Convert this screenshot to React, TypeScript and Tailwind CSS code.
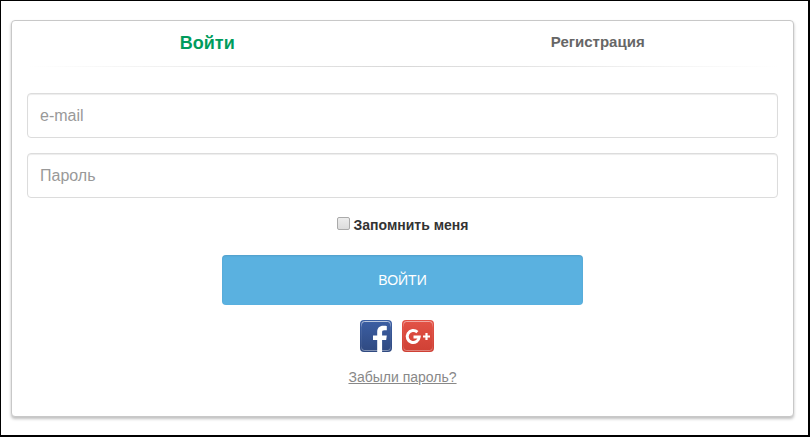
import { useState } from "react";

function FacebookIcon() {
  return (
    <svg width="32" height="32" viewBox="0 0 32 32" aria-hidden="true">
      <defs>
        <linearGradient id="fb-fill" x1="0" y1="0" x2="0" y2="1">
          <stop offset="0" stopColor="#3c5fa4" />
          <stop offset="1" stopColor="#2f4980" />
        </linearGradient>
        <linearGradient id="fb-edge" x1="0" y1="0" x2="0" y2="1">
          <stop offset="0" stopColor="#fff" stopOpacity="0.65" />
          <stop offset="0.2" stopColor="#fff" stopOpacity="0.08" />
          <stop offset="0.85" stopColor="#fff" stopOpacity="0.05" />
          <stop offset="1" stopColor="#fff" stopOpacity="0.4" />
        </linearGradient>
      </defs>
      <rect width="32" height="32" rx="4" fill="url(#fb-fill)" />
      <rect x="1.5" y="1.5" width="29" height="29" rx="3" fill="none" stroke="url(#fb-edge)" />
      <path
        fill="#fff"
        d="M17.2 32V20H13v-4.600h4.200V12C17.200 8 19.600 5.800 23.200 5.800c1.700 0 3.100.1 3.600.2v4.200h-2.500c-1.900 0-2.200.9-2.200 2.300v2.900h4.700l-.6 4.600h-4.100v12z"
      />
    </svg>
  );
}

function GooglePlusIcon() {
  return (
    <svg width="32" height="32" viewBox="0 0 32 32" aria-hidden="true">
      <defs>
        <linearGradient id="gp-fill" x1="0" y1="0" x2="0" y2="1">
          <stop offset="0" stopColor="#e35347" />
          <stop offset="1" stopColor="#cf4034" />
        </linearGradient>
        <linearGradient id="gp-edge" x1="0" y1="0" x2="0" y2="1">
          <stop offset="0" stopColor="#fff" stopOpacity="0.5" />
          <stop offset="0.2" stopColor="#fff" stopOpacity="0.05" />
          <stop offset="0.85" stopColor="#fff" stopOpacity="0.05" />
          <stop offset="1" stopColor="#fff" stopOpacity="0.35" />
        </linearGradient>
      </defs>
      <rect width="32" height="32" rx="4" fill="url(#gp-fill)" />
      <rect x="1.5" y="1.5" width="29" height="29" rx="3" fill="none" stroke="url(#gp-edge)" />
      <path
        d="M15.400 12.200A6 6 0 1 0 17.200 17H11.500"
        fill="none"
        stroke="#fff"
        strokeWidth="3"
      />
      <path d="M24.500 13v7M21 16.500h7" stroke="#fff" strokeWidth="2.200" />
    </svg>
  );
}

const inputClass =
  "block h-[45px] w-full rounded border border-[#dcdcdc] bg-white px-3 text-base text-[#555] shadow-[inset_0_1px_1px_rgba(0,0,0,0.075)] outline-none placeholder:text-[#999]";

export default function App() {
  const [remember, setRemember] = useState(false);

  return (
    <main className="min-h-screen border-t border-r-2 border-b-2 border-l border-black bg-white pt-[19px] pr-3.5 pb-4 pl-2.5 font-['Liberation_Sans',Arial,sans-serif]">
      <section className="rounded border border-[#c8c8c8] bg-white shadow-[0_2px_3px_rgba(0,0,0,0.25)]">
        <nav className="grid h-[45px] grid-cols-2 items-center pb-0.5 text-center font-bold">
          <button type="button" className="text-lg text-[#009c5c]">
            Войти
          </button>
          <button type="button" className="text-[15px] text-[#666]">
            Регистрация
          </button>
        </nav>

        <form className="px-[15px] pb-[29px]" onSubmit={(e) => e.preventDefault()}>
          <hr className="mb-[26px] h-px border-0 bg-linear-to-r from-transparent via-[#d8d8d8] to-transparent" />

          <div className="flex flex-col gap-[15px]">
            <input type="email" aria-label="e-mail" placeholder="e-mail" className={inputClass} />
            <input type="password" aria-label="Пароль" placeholder="Пароль" className={inputClass} />
          </div>

          <label className="mt-[15px] flex h-6 items-center justify-center gap-1 text-sm font-bold text-[#333]">
            <input
              type="checkbox"
              checked={remember}
              onChange={(e) => setRemember(e.target.checked)}
              className="mb-1 size-[13px] appearance-none rounded-xs border border-[#aaa] bg-linear-to-b from-[#ececec] to-[#dcdcdc] checked:border-[#357ca5] checked:from-[#5ab1e0] checked:to-[#4a9fce]"
            />
            Запомнить меня
          </label>

          <button
            type="submit"
            className="mx-auto mt-[18px] block h-[50px] w-12/25 rounded bg-[#5ab1e0] text-sm text-white shadow-[inset_0_1px_2px_rgba(0,0,0,0.1)]"
          >
            ВОЙТИ
          </button>

          <div className="mt-[15px] flex justify-center gap-2.5 pr-3">
            <a href="#facebook" aria-label="Facebook">
              <FacebookIcon />
            </a>
            <a href="#google" aria-label="Google+">
              <GooglePlusIcon />
            </a>
          </div>

          <p className="mt-[15px] text-center text-sm">
            <a href="#forgot" className="text-[#888] underline">
              Забыли пароль?
            </a>
          </p>
        </form>
      </section>
    </main>
  );
}
